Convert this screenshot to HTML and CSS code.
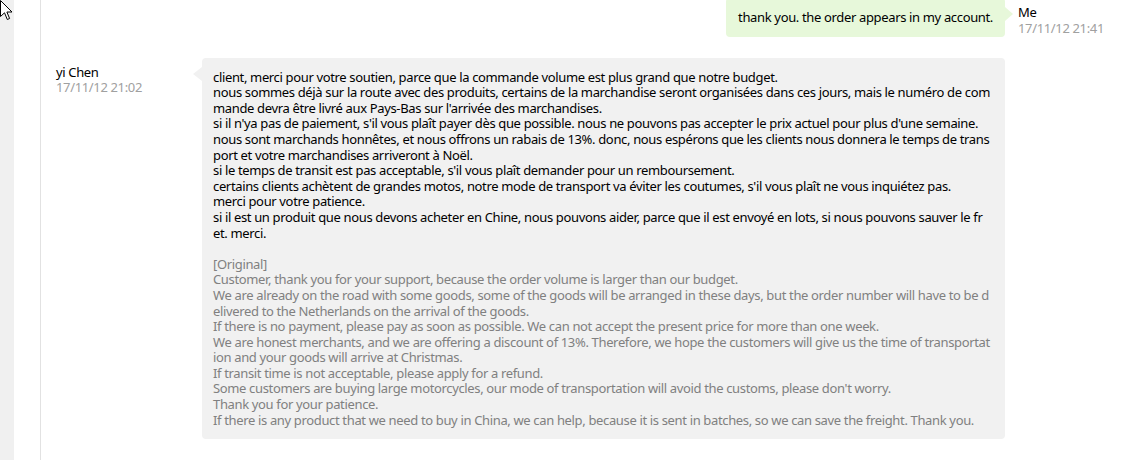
FILE: index.html
```html
<!DOCTYPE html>
<html>
<head>
    <title>Messages</title>
    <link rel="stylesheet" href="styles.css">
</head>
<body>
    <div class="page">
        <div class="side-strip"></div>
        <div class="chat-panel">
            <div class="chat-list">

                <div class="msg mine">
                    <div class="meta-left"></div>
                    <div class="bubble-col">
                        <div class="bubble green">thank you. the order appears in my account.</div>
                    </div>
                    <div class="meta-right">
                        <div class="who">Me</div>
                        <div class="when">17/11/12 21:41</div>
                    </div>
                </div>

                <div class="msg theirs">
                    <div class="meta-left">
                        <div class="who">yi Chen</div>
                        <div class="when">17/11/12 21:02</div>
                    </div>
                    <div class="bubble-col">
                        <div class="bubble grey">
                            <div class="translated">client, merci pour votre soutien, parce que la commande volume est plus grand que notre budget.<br>nous sommes déjà sur la route avec des produits, certains de la marchandise seront organisées dans ces jours, mais le numéro de com<br>mande devra être livré aux Pays-Bas sur l'arrivée des marchandises.<br>si il n'ya pas de paiement, s'il vous plaît payer dès que possible. nous ne pouvons pas accepter le prix actuel pour plus d'une semaine.<br>nous sont marchands honnêtes, et nous offrons un rabais de 13%. donc, nous espérons que les clients nous donnera le temps de trans<br>port et votre marchandises arriveront à Noël.<br>si le temps de transit est pas acceptable, s'il vous plaît demander pour un remboursement.<br>certains clients achètent de grandes motos, notre mode de transport va éviter les coutumes, s'il vous plaît ne vous inquiétez pas.<br>merci pour votre patience.<br>si il est un produit que nous devons acheter en Chine, nous pouvons aider, parce que il est envoyé en lots, si nous pouvons sauver le fr<br>et. merci.</div>
                            <div class="original">[Original]<br>Customer, thank you for your support, because the order volume is larger than our budget.<br>We are already on the road with some goods, some of the goods will be arranged in these days, but the order number will have to be d<br>elivered to the Netherlands on the arrival of the goods.<br>If there is no payment, please pay as soon as possible. We can not accept the present price for more than one week.<br>We are honest merchants, and we are offering a discount of 13%. Therefore, we hope the customers will give us the time of transportat<br>ion and your goods will arrive at Christmas.<br>If transit time is not acceptable, please apply for a refund.<br>Some customers are buying large motorcycles, our mode of transportation will avoid the customs, please don't worry.<br>Thank you for your patience.<br>If there is any product that we need to buy in China, we can help, because it is sent in batches, so we can save the freight. Thank you.</div>
                        </div>
                    </div>
                    <div class="meta-right"></div>
                </div>

            </div>
        </div>
    </div>

    <svg class="cursor" width="13" height="21" viewBox="0 0 13 21">
        <path d="M0.5 0.5 L0.5 16.5 L4.5 12.8 L7.3 19.5 L9.6 18.5 L6.9 12 L12 12 Z" fill="#fff" stroke="#000" stroke-width="1"/>
    </svg>
</body>
</html>
```

FILE: styles.css
```css
html, body {
    margin: 0;
    padding: 0;
    background-color: #fff;
}
body {
    font-family: "Noto Sans", "Noto Sans CJK SC", sans-serif;
    font-size: 13px;
    line-height: 1.2;
    letter-spacing: -0.35px;
    color: #000;
    overflow: hidden;
}
.page {
    display: flex;
    height: 460px;
}
.side-strip {
    width: 14px;
    background-color: #f0f0f0;
}
.chat-panel {
    margin-left: 26px;
    flex: 1;
    border-left: 1px solid #e2e2e2;
    overflow: hidden;
}
.chat-list {
    margin-top: -2px;
    padding-left: 15px;
}
.msg {
    display: grid;
    grid-template-columns: 146px 803px 1fr;
    margin-bottom: 21px;
}
.meta-left,
.meta-right {
    padding-top: 7px;
}
.meta-right {
    padding-left: 13px;
}
.who {
    color: #000;
}
.when {
    color: #a0a0a0;
}
.bubble-col {
    display: flex;
    min-width: 0;
}
.mine .bubble-col {
    justify-content: flex-end;
}
.bubble {
    position: relative;
    border-radius: 4px;
    padding: 12px 12px 11px 11px;
    white-space: nowrap;
}
.bubble.green {
    background-color: #e7f8da;
    padding-left: 12px;
}
.bubble.grey {
    background-color: #f1f1f1;
    flex: 1;
    min-width: 0;
}
.bubble::before {
    content: "";
    position: absolute;
    top: 9px;
    border-top: 7px solid transparent;
    border-bottom: 7px solid transparent;
}
.bubble.green::before {
    right: -8px;
    border-left: 8px solid #e7f8da;
}
.bubble.grey::before {
    left: -9px;
    border-right: 9px solid #f1f1f1;
}
.original {
    margin-top: 15.6px;
    color: #808080;
}
.cursor {
    position: absolute;
    top: 0;
    left: 0;
}
```
